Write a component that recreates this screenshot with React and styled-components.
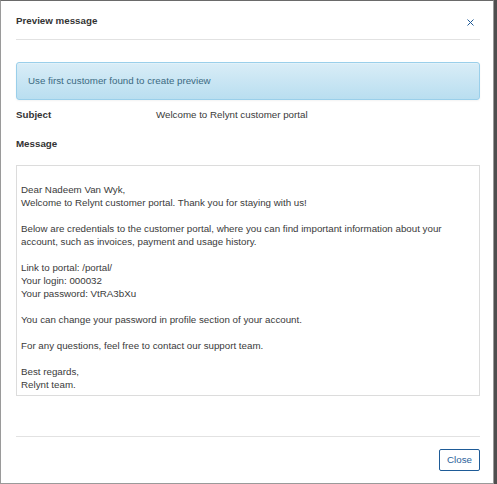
import React from "react";
import styled, { createGlobalStyle } from "styled-components";

const GlobalStyle = createGlobalStyle`
  html, body {
    margin: 0;
    padding: 0;
    background: #4f4f4f;
  }

  body {
    font-family: "Liberation Sans", Arial, sans-serif;
    font-size: 9.75px;
    line-height: 13px;
    color: #333;
  }
`;

const Modal = styled.div`
  width: 494px;
  height: 484px;
  box-sizing: border-box;
  background: #fff;
  border: 1px solid #9a9a9a;
  border-top-color: #6a6a6a;
  padding: 0 13px 0 15px;
  display: flex;
  flex-direction: column;
`;

const Header = styled.div`
  display: flex;
  justify-content: space-between;
  align-items: flex-start;
  padding: 13px 0 12px;
  border-bottom: 1px solid #e2e2e2;
`;

const Title = styled.h4`
  margin: 0;
  font-size: 9.75px;
  line-height: 13px;
  font-weight: bold;
  color: #333;
`;

const CloseIcon = styled.button`
  display: flex;
  margin: 5px 6px 0 0;
  padding: 0;
  border: 0;
  background: none;
  cursor: pointer;
`;

const Alert = styled.div`
  margin-top: 22px;
  padding: 11px 11px 12px;
  border: 1px solid #9acfea;
  border-radius: 3px;
  background: linear-gradient(to bottom, #d9edf7 0%, #b9def0 100%);
  box-shadow: inset 0 1px 0 rgba(255, 255, 255, 0.25), 0 1px 2px rgba(0, 0, 0, 0.05);
  color: #3b6a82;
`;

const FieldRow = styled.div`
  display: grid;
  grid-template-columns: 140px 1fr;
  margin-top: ${({ gap }) => gap}px;
`;

const Label = styled.span`
  font-weight: bold;
  color: #333;
`;

const Value = styled.span`
  color: #3a3a3a;
`;

const MessageBox = styled.div`
  margin-top: 15px;
  padding: 4px;
  border: 1px solid #dcdcdc;
  white-space: pre-line;
  color: #3a3a3a;
`;

const Footer = styled.div`
  margin-top: 40px;
  padding: 12px 0;
  border-top: 1px solid #e2e2e2;
  display: flex;
  justify-content: flex-end;
`;

const Button = styled.button`
  font-family: "Liberation Sans", Arial, sans-serif;
  font-size: 9.75px;
  line-height: 13px;
  padding: 3px 7px 4px;
  border: 1px solid #1e5b97;
  border-radius: 2px;
  background: #fff;
  color: #2a619a;
  cursor: pointer;
`;

const message = `
Dear Nadeem Van Wyk,
Welcome to Relynt customer portal. Thank you for staying with us!

Below are credentials to the customer portal, where you can find important information about your
account, such as invoices, payment and usage history.

Link to portal: /portal/
Your login: 000032
Your password: VtRA3bXu

You can change your password in profile section of your account.

For any questions, feel free to contact our support team.

Best regards,
Relynt team.`;

function App() {
  return (
    <>
      <GlobalStyle />
      <Modal>
        <Header>
          <Title>Preview message</Title>
          <CloseIcon type="button" aria-label="Close">
            <svg width="7" height="7" viewBox="0 0 7 7">
              <path d="M0.5 0.5 L6.5 6.5 M6.5 0.5 L0.5 6.5" stroke="#1f5a96" strokeWidth="1" />
            </svg>
          </CloseIcon>
        </Header>
        <Alert>Use first customer found to create preview</Alert>
        <FieldRow gap={8}>
          <Label>Subject</Label>
          <Value>Welcome to Relynt customer portal</Value>
        </FieldRow>
        <FieldRow gap={16}>
          <Label>Message</Label>
        </FieldRow>
        <MessageBox>{message}</MessageBox>
        <Footer>
          <Button type="button">Close</Button>
        </Footer>
      </Modal>
    </>
  );
}

export default App;
